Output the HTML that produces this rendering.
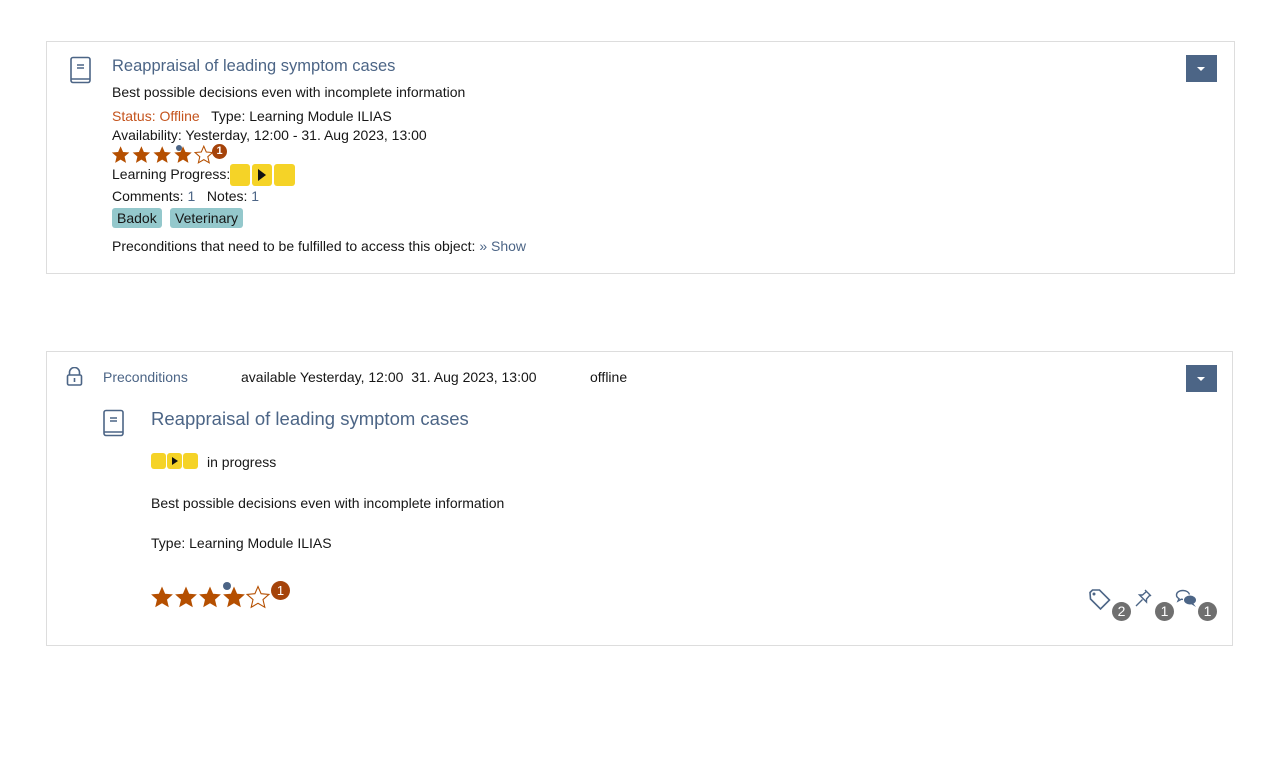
<!DOCTYPE html>
<html><head><meta charset="utf-8"><style>
body{margin:0;background:#fff;font-family:"Liberation Sans",sans-serif;color:#161616;font-size:14px;width:1282px;height:766px;position:relative;overflow:hidden}
.a{position:absolute;white-space:nowrap}
.card{position:absolute;border:1px solid #dddddd;box-sizing:border-box}
.lnk{color:#4c6586}
.btn{position:absolute;width:31px;height:27px;background:#4c6586}
.btn:after{content:"";position:absolute;left:11px;top:12px;border-left:4.5px solid transparent;border-right:4.5px solid transparent;border-top:4px solid #fff}
.tag{position:absolute;background:#94c8cc;border-radius:3px;padding:0 5px;height:20px;line-height:20px;font-size:14px}
.y{position:absolute;background:#f5d327;border-radius:3px}
.b{position:absolute;border-radius:50%;color:#fff;text-align:center;font-weight:bold}
.g{position:absolute;border-radius:50%;background:#6f6f6f;color:#fff;text-align:center;width:19px;height:19px;line-height:19px;font-size:14px}
</style></head><body>
<svg width="0" height="0" style="position:absolute"><defs>
<path id="st" d="M12 1.5l3.1 7.2 7.8.7-5.9 5.2 1.8 7.7L12 18.3l-6.8 4 1.8-7.7L1.1 9.4l7.8-.7z"/>
<g id="book"><rect x="2" y="1.5" width="19" height="25" rx="2" fill="none" stroke="#4c6586" stroke-width="1.6"/><path d="M2.5 23h18" stroke="#4c6586" stroke-width="1.4" fill="none"/><path d="M8 9h7M8 12h7" stroke="#4c6586" stroke-width="1.4"/></g>
</defs></svg>

<div class="card" style="left:46px;top:41px;width:1189px;height:233px"></div>
<svg class="a" style="left:69px;top:55px" width="24" height="30" viewBox="0 0 24 28"><use href="#book"/></svg>
<div class="a lnk" style="left:112px;top:57px;font-size:16.5px">Reappraisal of leading symptom cases</div>
<div class="a" style="left:112px;top:84px">Best possible decisions even with incomplete information</div>
<div class="a" style="left:112px;top:108px"><span style="color:#c4531c">Status: Offline</span>&nbsp;&nbsp; Type: Learning Module ILIAS</div>
<div class="a" style="left:112px;top:127px">Availability: Yesterday, 12:00 - 31. Aug 2023, 13:00</div>
<svg class="a" style="left:111px;top:145px" width="110" height="20" viewBox="0 0 110 20">
<g fill="#b54f00" transform="scale(.8)"><use href="#st"/><use href="#st" x="26"/><use href="#st" x="52"/><use href="#st" x="78"/><use href="#st" x="104" fill="none" stroke="#b54f00" stroke-width="1.3"/></g>
<circle cx="68" cy="3" r="3" fill="#4c6586"/></svg>
<div class="b" style="left:212px;top:144px;width:15px;height:15px;line-height:15px;font-size:11px;background:#a5430a">1</div>
<div class="a" style="left:112px;top:166px">Learning Progress:</div>
<div class="y" style="left:230px;top:164px;width:20px;height:22px"></div>
<div class="y" style="left:252px;top:164px;width:20px;height:22px"></div>
<div class="y" style="left:274px;top:164px;width:21px;height:22px"></div>
<div class="a" style="left:258px;top:169px;border-left:8px solid #111;border-top:6px solid transparent;border-bottom:6px solid transparent"></div>
<div class="a" style="left:112px;top:188px">Comments: <span class="lnk">1</span>&nbsp;&nbsp; Notes: <span class="lnk">1</span></div>
<div class="tag" style="left:112px;top:208px">Badok</div>
<div class="tag" style="left:170px;top:208px">Veterinary</div>
<div class="a" style="left:112px;top:238px">Preconditions that need to be fulfilled to access this object: <span class="lnk">» Show</span></div>
<div class="btn" style="left:1186px;top:55px"></div>

<div class="card" style="left:46px;top:351px;width:1187px;height:295px"></div>
<svg class="a" style="left:66px;top:367px" width="17" height="19" viewBox="0 0 17 19"><path d="M3.5 8V5.5a5 5 0 0 1 10 0V8" fill="none" stroke="#4c6586" stroke-width="1.6"/><rect x="1.5" y="8" width="14" height="10" rx="1.5" fill="none" stroke="#4c6586" stroke-width="1.6"/><path d="M8.5 11v4" stroke="#4c6586" stroke-width="1.6"/></svg>
<div class="a lnk" style="left:103px;top:369px">Preconditions</div>
<div class="a" style="left:241px;top:369px">available Yesterday, 12:00&nbsp; 31. Aug 2023, 13:00</div>
<div class="a" style="left:590px;top:369px">offline</div>
<div class="btn" style="left:1186px;top:365px"></div>
<svg class="a" style="left:102px;top:408px" width="24" height="30" viewBox="0 0 24 28"><use href="#book"/></svg>
<div class="a lnk" style="left:151px;top:408px;font-size:18.5px">Reappraisal of leading symptom cases</div>
<div class="y" style="left:151px;top:453px;width:15px;height:16px"></div>
<div class="y" style="left:167px;top:453px;width:15px;height:16px"></div>
<div class="y" style="left:183px;top:453px;width:15px;height:16px"></div>
<div class="a" style="left:172px;top:457px;border-left:6px solid #111;border-top:4px solid transparent;border-bottom:4px solid transparent"></div>
<div class="a" style="left:207px;top:454px">in progress</div>
<div class="a" style="left:151px;top:495px">Best possible decisions even with incomplete information</div>
<div class="a" style="left:151px;top:535px">Type: Learning Module ILIAS</div>
<svg class="a" style="left:150px;top:581px" width="125" height="30" viewBox="0 0 125 30">
<g fill="#b54f00" transform="translate(0 4)"><use href="#st"/><use href="#st" x="24"/><use href="#st" x="48"/><use href="#st" x="72"/><use href="#st" x="96" fill="none" stroke="#b54f00" stroke-width="1.1"/></g>
<circle cx="77" cy="5" r="4" fill="#4c6586"/></svg>
<div class="b" style="left:271px;top:581px;width:19px;height:19px;line-height:19px;font-size:13px;background:#a5430a;font-weight:normal">1</div>
<svg class="a" style="left:1088px;top:588px" width="24" height="24" viewBox="0 0 24 24"><path d="M2 4.5L4.5 2h7l10 10-9 9-10-10z" fill="none" stroke="#4c6586" stroke-width="1.6"/><circle cx="6" cy="6" r="1.5" fill="#4c6586"/></svg>
<div class="g" style="left:1112px;top:602px">2</div>
<svg class="a" style="left:1134px;top:588px" width="20" height="20" viewBox="0 0 20 20"><path d="M11 2l6 6M12.5 3.5l-4 3.5-3 0 7 7 0-3 3.5-4M8.5 11.5L2 18" fill="none" stroke="#4c6586" stroke-width="1.4"/></svg>
<div class="g" style="left:1155px;top:602px">1</div>
<svg class="a" style="left:1175px;top:589px" width="24" height="22" viewBox="0 0 24 22"><path d="M8 1.5c-4 0-6.5 2-6.5 4.5 0 1.6 1 2.8 2.5 3.6L3 12l3.3-1.8c.5.1 1.1.2 1.7.2" fill="none" stroke="#4c6586" stroke-width="1.4"/><path d="M8 1.5c3.5 0 6 1.8 6.4 4" fill="none" stroke="#4c6586" stroke-width="1.4"/><ellipse cx="15" cy="11" rx="6" ry="4.5" fill="#4c6586"/><path d="M18 14l3 4-5-3z" fill="#4c6586"/></svg>
<div class="g" style="left:1198px;top:602px">1</div>
</body></html>
